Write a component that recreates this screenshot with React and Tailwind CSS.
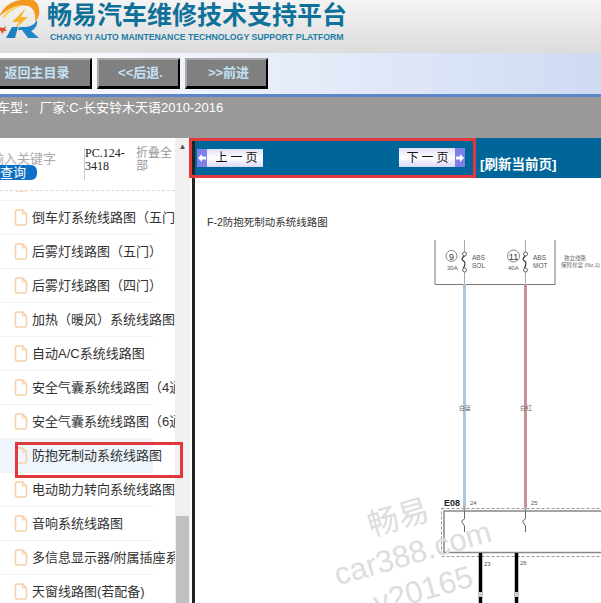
import React from 'react';

const cjk = "font-['Liberation_Sans','Noto_Sans_CJK_SC',sans-serif]";

const items = [
    '倒车灯系统线路图（四门）',
    '倒车灯系统线路图（五门）',
    '后雾灯线路图（五门）',
    '后雾灯线路图（四门）',
    '加热（暖风）系统线路图',
    '自动A/C系统线路图',
    '安全气囊系统线路图（4通道）',
    '安全气囊系统线路图（6通道）',
    '防抱死制动系统线路图',
    '电动助力转向系统线路图',
    '音响系统线路图',
    '多信息显示器/附属插座系统',
    '天窗线路图(若配备)',
];

const FileIcon = () => (
    <svg width="14" height="17" viewBox="0 0 14 17" fill="none" className="shrink-0">
        <path d="M1.500 2.500a1.500 1.500 0 0 1 1.500-1.500h5.500l4 4v9.500a1.500 1.500 0 0 1-1.500 1.500H3a1.500 1.500 0 0 1-1.500-1.500z" stroke="#f6cfa6" strokeWidth="1.500" />
        <path d="M8.500 1v4h4" stroke="#f6cfa6" strokeWidth="1.200" />
    </svg>
);

const Logo = () => (
    <svg width="44" height="40" viewBox="0 0 44 40" className="shrink-0">
        {/* orange swoosh */}
        <path d="M0 17C4 7 12 1 22 0h12c5 2 7 8 6 15-1 3-2 5-4 7 1-8-1-14-7-16-9-2-20 2-29 11z" fill="#f29a1f" />
        <path d="M3 17C9 9 17 5 26 5c-8 2-15 6-20 13z" fill="#fbd46a" />
        {/* bolt */}
        <path d="M27 8L13 22h7l-4 7 13-12h-7z" fill="#f7b52e" />
        {/* R */}
        <path d="M7 38l6-11h6l-3 11z" fill="#1b7fc0" />
        <path d="M20 27h6c6 0 10-3 12-7 1 5-2 9-6 11l8 7H29l-6-8h-4z" fill="#1c86c6" />
        <path d="M0 27l4 1 3-2-1 3 2 2-3 0-2 3-1-3-2-1z" fill="#d9512b" />
    </svg>
);

const NavButton = ({ label, className }) => (
    <button className={`h-[31px] shrink-0 bg-[#808080] border-2 border-t-[#a8a8a8] border-l-[#a8a8a8] border-r-black border-b-[3px] border-b-black text-[13px] font-bold text-[#c4e2f5] ${className}`}>
        {label}
    </button>
);

const Arrow = ({ flip }) => (
    <span className="w-[10px] h-full bg-[#7d80e8] flex items-center justify-center shrink-0">
        <svg width="8" height="8" viewBox="0 0 8 8" className={flip ? 'rotate-180' : ''}>
            <path d="M0 4l4-4v2.500h4v3H4V8z" fill="#fff" />
        </svg>
    </span>
);

const PageButton = ({ label, dir, className }) => (
    <button className={`flex items-center bg-gradient-to-b from-[#dfdff8] via-white to-[#d8d8f6] text-[12px] text-[#111] ${className}`}>
        {dir === 'prev' && <Arrow />}
        <span className={`flex-1 text-center tracking-[3px] whitespace-nowrap ${dir === 'prev' ? 'pl-[6px]' : 'pl-[4px]'}`}>{label}</span>
        {dir === 'next' && <Arrow flip />}
    </button>
);

const Diagram = () => (
    <svg width="406" height="425" viewBox="195 178 406 425" className="block">
        <text x="207" y="226" fontSize="10.500" fill="#333">F-2防抱死制动系统线路图</text>
        {/* fuse box */}
        <path d="M435 240v44.500h120V240" fill="none" stroke="#777" strokeWidth="1" />
        <circle cx="451.500" cy="256" r="5.500" fill="none" stroke="#888" />
        <text x="451.500" y="259.500" fontSize="9" textAnchor="middle" fill="#333">9</text>
        <text x="447" y="270" fontSize="6" fill="#555">30A</text>
        <circle cx="513.500" cy="256" r="6" fill="none" stroke="#888" />
        <text x="513.500" y="259.500" fontSize="9" textAnchor="middle" fill="#333">11</text>
        <text x="508" y="270" fontSize="6" fill="#555">40A</text>
        <text x="472" y="260" fontSize="6.500" fill="#555">ABS</text>
        <text x="472" y="268" fontSize="6.500" fill="#555">SOL</text>
        <text x="533" y="260" fontSize="6.500" fill="#555">ABS</text>
        <text x="533" y="268" fontSize="6.500" fill="#555">MOT</text>
        <text x="564" y="260" fontSize="5.500" fill="#666">独立线路</text>
        <text x="561" y="267" fontSize="5.500" fill="#666">保险丝盒 (No.1)</text>
        {/* wires */}
        <path d="M464.500 240v12M525.500 240v12M464.500 272v12M525.500 272v12" stroke="#aaa" />
        <circle cx="464.500" cy="254" r="2" fill="none" stroke="#666" />
        <circle cx="464.500" cy="270" r="2" fill="none" stroke="#666" />
        <circle cx="525.500" cy="254" r="2" fill="none" stroke="#666" />
        <circle cx="525.500" cy="270" r="2" fill="none" stroke="#666" />
        <path d="M464.500 256c-3 2-3 4-1 5s2 3 0 7" fill="none" stroke="#333" strokeWidth="1.200" />
        <path d="M525.500 256c-3 2-3 4-1 5s2 3 0 7" fill="none" stroke="#333" strokeWidth="1.200" />
        <path d="M464.500 284V507" stroke="#a8c8de" strokeWidth="3" />
        <path d="M525.500 284V507" stroke="#cd8f97" strokeWidth="3" />
        <text x="459" y="410" fontSize="6" fill="#666">白蓝</text>
        <text x="520" y="410" fontSize="6" fill="#666">白红</text>
        {/* connector */}
        <text x="444" y="506" fontSize="9" fontWeight="bold" fill="#222">E08</text>
        <text x="470" y="505" fontSize="6" fill="#555">24</text>
        <text x="531" y="505" fontSize="6" fill="#555">25</text>
        <rect x="441.500" y="508.500" width="170" height="48" fill="none" stroke="#999" strokeDasharray="3 2" />
        <rect x="444" y="511" width="170" height="41.500" fill="none" stroke="#888" strokeWidth="1.500" />
        <path d="M464.500 507v4M525.500 507v4" stroke="#999" strokeWidth="2" />
        <path d="M464.500 511v8l-3 2 3 5v6M525.500 511v8l-3 2 3 5v6" fill="none" stroke="#666" />
        <path d="M480.500 553V603M516.500 553V603" stroke="#000" strokeWidth="3.500" />
        <path d="M480.500 592v5M516.500 592v5" stroke="#ccc" strokeWidth="3.500" />
        <text x="484" y="566" fontSize="6" fill="#555">23</text>
        <text x="520" y="565" fontSize="6" fill="#555">26</text>
    </svg>
);

const App = () => {
    return (
        <div className={`relative w-[601px] h-[603px] overflow-hidden bg-white ${cjk}`}>
            {/* banner */}
            <div className="h-[53px] flex items-start gap-[4px] -ml-[1px] bg-gradient-to-b from-[#f4f4f4] to-[#dcdcdc]">
                <Logo />
                <div className="flex flex-col pt-[1px]">
                    <div className="text-[25px] leading-[28px] font-bold text-[#0f7199] whitespace-nowrap">畅易汽车维修技术支持平台</div>
                    <div className="text-[8.700px] leading-[12px] mt-[2px] ml-[3px] font-bold text-[#1c7da6] whitespace-nowrap">CHANG YI AUTO MAINTENANCE TECHNOLOGY SUPPORT PLATFORM</div>
                </div>
            </div>

            {/* nav */}
            <div className="h-[44px] flex items-center gap-[5px] -ml-[18px] bg-gradient-to-r from-white to-[#cfdaf3] border-b-[3px] border-[#5b87c9]">
                <NavButton label="返回主目录" className="w-[110px]" />
                <NavButton label="<<后退." className="w-[83px] pl-1" />
                <NavButton label=">>前进" className="w-[83px] pl-1" />
            </div>

            {/* car info */}
            <div className="h-[41px] bg-[#999] text-white text-[13px] pt-px whitespace-nowrap -ml-[3px]">
                车型：&nbsp;厂家:C-长安铃木天语2010-2016
            </div>

            <div className="flex h-[465px]">
                {/* tree */}
                <div className="w-[175px] shrink-0 overflow-hidden bg-white flex flex-col">
                    <div className="h-[53px] shrink-0 flex border-b border-dashed border-[#d9d9d9]">
                        <div className="w-[85px] shrink-0 relative border-r border-[#ccc] mt-[10px] mb-[10px]">
                            <div className="absolute left-[-22px] top-[3px] text-[13px] leading-[16px] text-[#aaa] whitespace-nowrap">请输入关键字</div>
                            <div className="absolute left-[-13px] top-[17px] w-[50px] h-[15px] rounded-[6px] bg-[#0d70c4] text-white text-[13px] leading-[15px] pl-[13px]">查询</div>
                        </div>
                        <div className="w-[51px] shrink-0 pt-[9px] text-[12px] leading-[13px] text-[#222] font-['Liberation_Serif',serif]">PC.124-3418</div>
                        <div className="w-[38px] shrink-0 pt-[9px] text-[12px] leading-[13px] text-[#999]">折叠全部</div>
                    </div>
                    {/* list is scrolled: only the foot of the first row shows */}
                    <div className="flex-1 min-h-0 overflow-hidden">
                        <div className="-mt-[24px]">
                            {items.map((item, i) => (
                                <div
                                    key={item}
                                    className={`h-[34px] w-[153px] flex items-center gap-[4px] pl-[14px] border-b border-[#f2f2f2] ${i === 8 ? 'bg-[#eef5fc]' : ''}`}
                                >
                                    <FileIcon />
                                    <span className="text-[13px] whitespace-nowrap text-[#333]">{item}</span>
                                </div>
                            ))}
                        </div>
                    </div>
                </div>

                {/* scrollbar */}
                <div className="w-[15px] shrink-0 bg-[#f0f0f0] flex flex-col justify-between z-10">
                    <div className="h-[18px] flex items-center justify-center text-[8px] text-[#555]">▲</div>
                    <div className="h-[87px] bg-[#c0c0c0] mx-px" />
                </div>
                <div className="w-[2px] shrink-0 bg-white" />
                <div className="w-[3px] shrink-0 bg-[#222]" />

                {/* page */}
                <div className="flex-1 min-w-0">
                    <div className="h-[40px] bg-[#006699] relative">
                        <PageButton label="上一页" dir="prev" className="absolute left-[2px] top-[11px] w-[66px] h-[18px]" />
                        <PageButton label="下一页" dir="next" className="absolute left-[204px] top-[10px] w-[66px] h-[19px]" />
                        <span className="absolute left-[285px] top-[17px] text-[13.500px] font-bold text-white whitespace-nowrap">[刷新当前页]</span>
                    </div>
                    <Diagram />
                </div>
            </div>

            {/* watermark */}
            <div className="absolute left-[335px] top-[519px] -rotate-[16deg] origin-left text-[#dddddd] text-[31px] leading-[38px] pointer-events-none whitespace-nowrap">
                <div className="pl-[46px]">畅易</div>
                <div>car388.com</div>
                <div className="pl-[30px]">v20165</div>
            </div>

            {/* red annotation boxes */}
            <div className="absolute z-20 left-[189px] top-[138px] w-[287px] h-[40px] border-[3px] border-[#e03a3e]" />
            <div className="absolute z-20 left-[15px] top-[442px] w-[168px] h-[36px] border-[3px] border-[#e03a3e]" />
        </div>
    );
};

export default App;
